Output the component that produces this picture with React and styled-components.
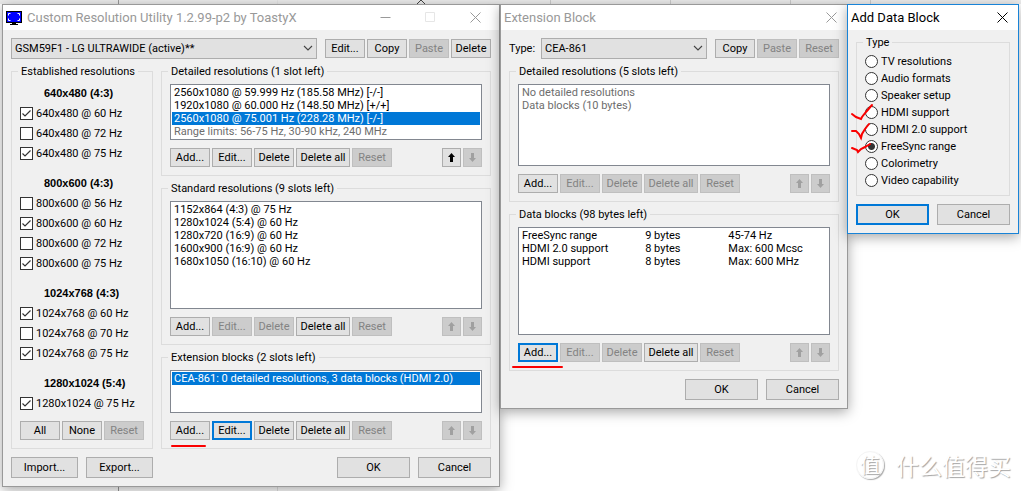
import React from "react";
import styled, { createGlobalStyle, css } from "styled-components";

const Global = createGlobalStyle`
  * { box-sizing: border-box; }
  body { margin: 0; background: #fff; }
  button, select, input { font: inherit; color: inherit; }
`;

const Desktop = styled.main`
  position: relative;
  min-height: 100vh;
  overflow: hidden;
  display: grid;
  grid-template-columns: minmax(0, 498fr) minmax(0, 348fr) minmax(0, 171fr);
  align-items: start;
  padding: 4px 2px 4px 2px;
  font: 11px/13px Roboto, sans-serif;
  color: #000;
  background: linear-gradient(#ececec 0 4px, #fff 4px);
`;

const Backdrop = styled.svg`
  position: absolute;
  inset: 0;
  width: 100%;
  height: 100%;
`;

const Window = styled.section`
  position: relative;
  z-index: ${(p) => p.$level};
  margin-left: ${(p) => (p.$active ? "-1px" : "0")};
  border: 1px solid ${(p) => (p.$active ? "#1883d7" : "#999")};
  background: #f0f0f0;
  box-shadow: 0 3px 12px rgba(0, 0, 0, 0.35);
`;

const TitleBar = styled.header`
  display: flex;
  align-items: center;
  height: 25px;
  padding: 0 ${(p) => (p.$wide ? "18px" : "10px")} 0 3px;
  background: #fff;
  color: ${(p) => (p.$active ? "#000" : "#999")};
`;

const Title = styled.h1`
  flex: 1;
  min-width: 0;
  margin: 0;
  font-size: 13px;
  line-height: 20px;
  font-weight: 400;
  white-space: nowrap;
`;

const AppIcon = styled.svg`
  flex: none;
  margin-right: 5px;
`;

const CaptionButtons = styled.div`
  display: flex;
  gap: 34px;
`;

const CaptionButton = styled.button`
  display: flex;
  padding: 0;
  border: 0;
  background: none;
  svg { stroke: ${(p) => (p.$faint ? "#e6e6e6" : "currentColor")}; fill: none; }
`;

const Body = styled.div`
  padding: ${(p) => (p.$tight ? "6px" : "8px")} 8px 8px;
`;

const TopRow = styled.div`
  display: flex;
  align-items: center;
  gap: 8px;
  margin-bottom: 6px;
`;

const ComboLabel = styled.label`
  width: 24px;
  white-space: nowrap;
`;

const ComboBox = styled.div`
  position: relative;
  flex: 1;
  min-width: 0;
  svg { position: absolute; right: 4px; top: 7px; pointer-events: none; }
`;

const Combo = styled.select`
  display: block;
  width: 100%;
  height: 21px;
  padding: 0 20px 0 3px;
  appearance: none;
  border: 1px solid #adadad;
  border-radius: 0;
  background: #e1e1e1;
`;

const ButtonRow = styled.div`
  display: flex;
  gap: 2px;
`;

const Spacer = styled.span`
  flex: 1;
`;

const widths = { small: "40px", medium: "54px", arrow: "19px", file: "67px", dialog: "73px" };

const PushButton = styled.button`
  display: flex;
  align-items: center;
  justify-content: center;
  flex: none;
  width: ${(p) => widths[p.$size || "small"]};
  height: ${(p) => (p.$size === "file" || p.$size === "dialog" ? "21px" : "19px")};
  padding: 0;
  white-space: nowrap;
  border: 1px solid #adadad;
  background: #e1e1e1;
  ${(p) => p.$default && css`border: 2px solid #0078d7;`}
  &:disabled {
    color: #838383;
    background: #ccc;
    border-color: #bfbfbf;
  }
`;

const Columns = styled.div`
  display: grid;
  grid-template-columns: 142px minmax(0, 1fr);
  gap: 8px;
`;

const Stack = styled.div`
  display: flex;
  flex-direction: column;
  gap: 6px;
`;

const Group = styled.fieldset`
  min-width: 0;
  margin: 0;
  padding: 0 8px ${(p) => (p.$tight ? "6px" : "8px")};
  border: 1px solid #dcdcdc;
`;

const Legend = styled.legend`
  margin-left: -2px;
  padding: 0 3px;
`;

const ListBox = styled.ul`
  height: ${(p) => p.$height};
  margin: 6px 0 8px;
  padding: 1px;
  list-style: none;
  border: 1px solid #828790;
  background: #fff;
`;

const Option = styled.li`
  padding: 0 2px;
  white-space: nowrap;
  color: ${(p) => (p.$selected ? "#fff" : p.$muted ? "#6d6d6d" : "#000")};
  background: ${(p) => (p.$selected ? "#0078d7" : "transparent")};
`;

const TableBox = styled.div`
  height: 108px;
  margin: 6px 0 8px;
  padding: 1px;
  border: 1px solid #828790;
  background: #fff;
`;

const DataTable = styled.table`
  width: 100%;
  table-layout: fixed;
  border-collapse: collapse;
  td { padding: 0 2px; white-space: nowrap; }
  td:nth-child(1) { width: 40%; }
  td:nth-child(2) { width: 27%; }
`;

const ModeList = styled.div`
  display: flex;
  flex-direction: column;
  gap: 10px;
  margin: 5px 0 8px;
`;

const ModeHeading = styled.h2`
  margin: 0 0 0 24px;
  font: bold 11px/20px "Liberation Sans", Arial, sans-serif;
`;

const Choice = styled.label`
  display: flex;
  align-items: center;
  gap: 3px;
  height: ${(p) => p.$height};
  white-space: nowrap;
`;

const checkMark = encodeURIComponent(
  '<svg xmlns="http://www.w3.org/2000/svg" width="11" height="11"><path d="M1.5 5.5 4 8 9.5 2.5" fill="none" stroke="#333" stroke-width="1.2"/></svg>'
);

const CheckInput = styled.input`
  appearance: none;
  width: 13px;
  height: 13px;
  margin: 0;
  border: 1px solid #333;
  background: #fff;
  &:checked { background: #fff url("data:image/svg+xml,${checkMark}") center no-repeat; }
`;

const RadioInput = styled.input`
  appearance: none;
  width: 13px;
  height: 13px;
  margin: 0;
  border: 1px solid #333;
  border-radius: 50%;
  background: #fff;
  &:checked { background: radial-gradient(circle, #333 3px, #fff 4px); }
`;

const RadioList = styled.div`
  padding-top: 4px;
`;

const Footer = styled.footer`
  display: flex;
  justify-content: ${(p) => (p.$spread ? "space-between" : "flex-start")};
  gap: 8px;
  margin-top: 8px;
`;

const Marked = styled.span`
  position: relative;
  display: flex;
`;

const Underline = styled.span`
  position: absolute;
  left: ${(p) => (p.$wide ? "-6px" : "1px")};
  right: ${(p) => (p.$wide ? "-5px" : "4px")};
  bottom: ${(p) => (p.$wide ? "-6px" : "-7px")};
  height: 2px;
  border-radius: 1px;
  background: #fa0000;
`;

const RedTick = styled.svg`
  position: absolute;
  left: -14px;
  top: -2px;
  overflow: visible;
  fill: none;
  stroke: #fa0000;
  stroke-width: 2;
  stroke-linecap: round;
`;

const Watermark = styled.div`
  position: absolute;
  right: 10px;
  bottom: 9px;
  display: flex;
  align-items: center;
  gap: 12px;
  font: 23px/34px "Noto Sans CJK SC", sans-serif;
  color: #fff;
  text-shadow: 1px 1px 1px #a4a4a4;
`;

const Seal = styled.span`
  width: 28px;
  height: 28px;
  border: 1px solid #f4f4f4;
  border-radius: 50%;
  box-shadow: 1px 1px 1px #aaa;
  font-size: 20px;
  line-height: 26px;
  text-align: center;
`;

function Close() {
  return (
    <CaptionButton aria-label="Close">
      <svg width="11" height="11"><path d="M.5.5l10 10M10.500.5l-10 10" /></svg>
    </CaptionButton>
  );
}

function Dropdown({ id, label, value }) {
  return (
    <ComboBox>
      <Combo id={id} aria-label={label} defaultValue={value}>
        <option>{value}</option>
      </Combo>
      <svg width="10" height="7"><path d="M1 1l4 4 4-4" fill="none" stroke="#444" strokeWidth="1.1" /></svg>
    </ComboBox>
  );
}

function Arrow({ down, disabled }) {
  return (
    <PushButton $size="arrow" disabled={disabled} aria-label={down ? "Move down" : "Move up"}>
      <svg width="9" height="9" viewBox="0 0 9 9">
        <path
          d={down ? "M3 0h3v5h2L4.500 9 1 5h2z" : "M3 9h3V4h2L4.500 0 1 4h2z"}
          fill={disabled ? "#a0a0a0" : "#000"}
        />
      </svg>
    </PushButton>
  );
}

function EditRow({ off = "", focus, underline, wide, up }) {
  const names = ["Add...", "Edit...", "Delete", "Delete all", "Reset"];
  return (
    <ButtonRow>
      {names.map((name) => {
        const button = (
          <PushButton
            key={name}
            $size={name === "Delete all" ? "medium" : "small"}
            $default={focus === name}
            disabled={off.split(",").includes(name)}
          >
            {name}
          </PushButton>
        );
        return underline && name === "Add..." ? (
          <Marked key={name}>{button}<Underline $wide={wide} /></Marked>
        ) : button;
      })}
      <Spacer />
      <Arrow disabled={!up} />
      <Arrow down disabled />
    </ButtonRow>
  );
}

const modes = [
  ["640x480 (4:3)", [["640x480 @ 60 Hz", true], ["640x480 @ 72 Hz", false], ["640x480 @ 75 Hz", true]]],
  ["800x600 (4:3)", [["800x600 @ 56 Hz", false], ["800x600 @ 60 Hz", true], ["800x600 @ 72 Hz", false], ["800x600 @ 75 Hz", true]]],
  ["1024x768 (4:3)", [["1024x768 @ 60 Hz", true], ["1024x768 @ 70 Hz", false], ["1024x768 @ 75 Hz", true]]],
  ["1280x1024 (5:4)", [["1280x1024 @ 75 Hz", true]]],
];

const standard = [
  "1152x864 (4:3) @ 75 Hz",
  "1280x1024 (5:4) @ 60 Hz",
  "1280x720 (16:9) @ 60 Hz",
  "1600x900 (16:9) @ 60 Hz",
  "1680x1050 (16:10) @ 60 Hz",
];

const dataBlocks = [
  ["FreeSync range", "9 bytes", "45-74 Hz"],
  ["HDMI 2.0 support", "8 bytes", "Max: 600 Mcsc"],
  ["HDMI support", "8 bytes", "Max: 600 MHz"],
];

const blockTypes = [
  ["TV resolutions"],
  ["Audio formats"],
  ["Speaker setup"],
  ["HDMI support", "M1 10l4 3 5 2 1-2 4-5 6-7"],
  ["HDMI 2.0 support", "M1 10h4l3 3 2 4 1-4 3-5 4-5"],
  ["FreeSync range", "M1 10l5 2 1 2 3-3 4-2 5-3"],
  ["Colorimetry"],
  ["Video capability"],
];

function MainWindow() {
  return (
    <Window $level={1}>
      <TitleBar $wide>
        <AppIcon width="16" height="14" viewBox="0 0 16 14">
          <path d="M0 0h16v12H0zM6 12h4v1h2v1H4v-1h2z" fill="#000" />
          <path d="M1 1h14v10H1z" fill="#00f" />
          <path d="M2.500 4.500v-2h2M11.500 2.500h2v2M13.500 7.500v2h-2M4.500 9.500h-2v-2" fill="none" stroke="#fff" />
        </AppIcon>
        <Title>Custom Resolution Utility 1.2.99-p2 by ToastyX</Title>
        <CaptionButtons>
          <CaptionButton aria-label="Minimize"><svg width="11" height="11"><path d="M.5 5.500h10" /></svg></CaptionButton>
          <CaptionButton $faint aria-label="Maximize"><svg width="11" height="11"><path d="M.5.5h9v9h-9z" /></svg></CaptionButton>
          <Close />
        </CaptionButtons>
      </TitleBar>
      <Body>
        <TopRow>
          <Dropdown label="Display" value="GSM59F1 - LG ULTRAWIDE (active)**" />
          <ButtonRow>
            <PushButton>Edit...</PushButton>
            <PushButton>Copy</PushButton>
            <PushButton disabled>Paste</PushButton>
            <PushButton>Delete</PushButton>
          </ButtonRow>
        </TopRow>
        <Columns>
          <Group>
            <Legend>Established resolutions</Legend>
            <ModeList>
              {modes.map(([heading, items]) => (
                <div key={heading}>
                  <ModeHeading>{heading}</ModeHeading>
                  {items.map(([name, on]) => (
                    <Choice key={name} $height="20px">
                      <CheckInput type="checkbox" defaultChecked={on} />
                      {name}
                    </Choice>
                  ))}
                </div>
              ))}
            </ModeList>
            <ButtonRow>
              <PushButton>All</PushButton>
              <PushButton>None</PushButton>
              <PushButton disabled>Reset</PushButton>
            </ButtonRow>
          </Group>
          <Stack>
            <Group>
              <Legend>Detailed resolutions (1 slot left)</Legend>
              <ListBox $height="56px">
                <Option>2560x1080 @ 59.999 Hz (185.58 MHz) [-/-]</Option>
                <Option>1920x1080 @ 60.000 Hz (148.50 MHz) [+/+]</Option>
                <Option $selected>2560x1080 @ 75.001 Hz (228.28 MHz) [-/-]</Option>
                <Option $muted>Range limits: 56-75 Hz, 30-90 kHz, 240 MHz</Option>
              </ListBox>
              <EditRow off="Reset" up />
            </Group>
            <Group>
              <Legend>Standard resolutions (9 slots left)</Legend>
              <ListBox $height="108px">
                {standard.map((s) => <Option key={s}>{s}</Option>)}
              </ListBox>
              <EditRow off="Edit...,Delete,Reset" />
            </Group>
            <Group>
              <Legend>Extension blocks (2 slots left)</Legend>
              <ListBox $height="43px">
                <Option $selected>CEA-861: 0 detailed resolutions, 3 data blocks (HDMI 2.0)</Option>
              </ListBox>
              <EditRow off="Reset" focus="Edit..." underline />
            </Group>
          </Stack>
        </Columns>
        <Footer>
          <PushButton $size="file">Import...</PushButton>
          <PushButton $size="file">Export...</PushButton>
          <Spacer />
          <PushButton $size="dialog">OK</PushButton>
          <PushButton $size="dialog">Cancel</PushButton>
        </Footer>
      </Body>
    </Window>
  );
}

function ExtensionWindow() {
  return (
    <Window $level={2}>
      <TitleBar>
        <Title>Extension Block</Title>
        <Close />
      </TitleBar>
      <Body>
        <TopRow>
          <ComboLabel htmlFor="block-type">Type:</ComboLabel>
          <Dropdown id="block-type" value="CEA-861" />
          <ButtonRow>
            <PushButton>Copy</PushButton>
            <PushButton disabled>Paste</PushButton>
            <PushButton disabled>Reset</PushButton>
          </ButtonRow>
        </TopRow>
        <Stack>
          <Group>
            <Legend>Detailed resolutions (5 slots left)</Legend>
            <ListBox $height="82px">
              <Option $muted>No detailed resolutions</Option>
              <Option $muted>Data blocks (10 bytes)</Option>
            </ListBox>
            <EditRow off="Edit...,Delete,Delete all,Reset" />
          </Group>
          <Group>
            <Legend>Data blocks (98 bytes left)</Legend>
            <TableBox>
              <DataTable>
                <tbody>
                  {dataBlocks.map((row) => (
                    <tr key={row[0]}>{row.map((c) => <td key={c}>{c}</td>)}</tr>
                  ))}
                </tbody>
              </DataTable>
            </TableBox>
            <EditRow off="Edit...,Delete,Reset" focus="Add..." underline wide />
          </Group>
        </Stack>
        <Footer>
          <Spacer />
          <PushButton $size="dialog">OK</PushButton>
          <PushButton $size="dialog">Cancel</PushButton>
        </Footer>
      </Body>
    </Window>
  );
}

function AddWindow() {
  return (
    <Window $level={3} $active>
      <TitleBar $active>
        <Title>Add Data Block</Title>
        <Close />
      </TitleBar>
      <Body $tight>
        <Group $tight>
          <Legend>Type</Legend>
          <RadioList>
            {blockTypes.map(([name, tick]) => (
              <Choice key={name} $height="17px">
                <Marked>
                  <RadioInput type="radio" name="kind" defaultChecked={name === "FreeSync range"} />
                  {tick && <RedTick width="20" height="20" aria-hidden="true"><path d={tick} /></RedTick>}
                </Marked>
                {name}
              </Choice>
            ))}
          </RadioList>
        </Group>
        <Footer $spread>
          <PushButton $size="dialog" $default>OK</PushButton>
          <PushButton $size="dialog">Cancel</PushButton>
        </Footer>
      </Body>
    </Window>
  );
}

export default function App() {
  return (
    <>
      <Global />
      <Desktop>
        <Backdrop aria-hidden="true">
          <path d="M118.500 0v600" stroke="#999" fill="none" />
          <path d="M277.500 0v600" stroke="#e4e4e4" fill="none" />
          <path d="M550.500 0v4M670.500 0v4M790.500 0v4M870.500 0v4" stroke="#ccc" fill="none" />
          <path d="M417 4l4-4 4 4" stroke="#444" fill="none" />
        </Backdrop>
        <MainWindow />
        <ExtensionWindow />
        <AddWindow />
        <Watermark><Seal>值</Seal>什么值得买</Watermark>
      </Desktop>
    </>
  );
}
